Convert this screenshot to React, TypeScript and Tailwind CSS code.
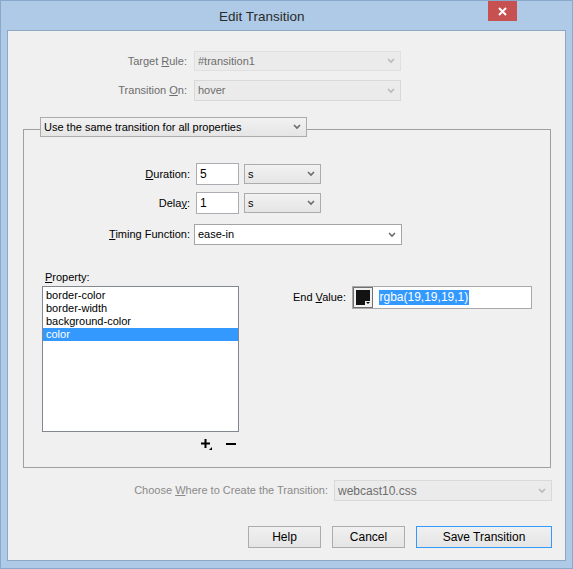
import React from "react";

function Chevron({ color = "#6b6b6b" }: { color?: string }) {
  return (
    <svg width="8" height="6" viewBox="0 0 8 6" className="shrink-0">
      <path d="M1 1 L4 4 L7 1" fill="none" stroke={color} strokeWidth="1.6" />
    </svg>
  );
}

function Select({
  value,
  className,
  disabled,
  white,
}: {
  value: string;
  className: string;
  disabled?: boolean;
  white?: boolean;
}) {
  const look = disabled
    ? "border-[#d9d9d9] bg-[#ebebeb] text-[#6d6d6d]"
    : white
      ? "border-[#a5a5a5] bg-white text-black"
      : "border-[#acacac] bg-gradient-to-b from-[#f2f2f2] to-[#e5e5e5] text-black";
  return (
    <div className={`flex items-center border pl-[3px] pr-[5px] ${look} ${className}`}>
      <span className="flex-1 truncate leading-none">{value}</span>
      <Chevron color={disabled ? "#b9b9b9" : "#6b6b6b"} />
    </div>
  );
}

function Btn({ label, primary, w }: { label: string; primary?: boolean; w: string }) {
  return (
    <div
      className={`flex h-[22px] items-center justify-center border bg-gradient-to-b from-[#f0f0f0] to-[#e5e5e5] text-[12px] text-black ${w} ${
        primary ? "border-[#3399ff]" : "border-[#acacac]"
      }`}
    >
      {label}
    </div>
  );
}

export default function App() {
  const props = ["border-color", "border-width", "background-color", "color"];
  return (
    <div className="flex h-[569px] w-[573px] flex-col border border-[#88a9cc] bg-[#aecae6] font-['Liberation_Sans',Arial,sans-serif] text-[11px]">
      {/* title bar */}
      <div className="flex h-[29px] items-start">
        <div className="ml-[218px] mt-[6px] text-[13.5px] text-[#2b2b2b]">Edit Transition</div>
        <div className="ml-auto mr-[55px] flex h-[20px] w-[29px] items-center justify-center bg-[#c75050]">
          <svg width="9" height="9" viewBox="0 0 9 9">
            <path d="M1 1 L8 8 M8 1 L1 8" stroke="white" strokeWidth="2" />
          </svg>
        </div>
      </div>

      {/* client area */}
      <div className="mx-[6px] mb-[7px] flex-1 border border-[#8ea7c2] bg-[#f0f0f0]">
        <div className="mt-[20px] flex items-center">
          <div className="w-[180px] pr-[1px] text-right text-[#6d6d6d]">
            Target <u>R</u>ule:
          </div>
          <Select value="#transition1" disabled className="ml-[6px] h-[20px] w-[207px] border-[#e0e0e0]" />
        </div>
        <div className="mt-[9px] flex items-center">
          <div className="w-[180px] pr-[1px] text-right text-[#6d6d6d]">
            Transition <u>O</u>n:
          </div>
          <Select value="hover" disabled className="ml-[6px] h-[21px] w-[207px]" />
        </div>

        {/* group box */}
        <div className="ml-[15px] mt-[16px] w-[528px]">
          <Select
            value="Use the same transition for all properties"
            className="relative z-10 ml-[17px] h-[20px] w-[267px]"
          />
          <div className="-mt-[8px] h-[339px] border border-[#a0a0a0]">
            <div className="mt-[33px] flex items-center">
              <div className="w-[166px] text-right">
                <u>D</u>uration:
              </div>
              <div className="ml-[6px] flex h-[22px] w-[43px] items-center border border-[#abadb3] bg-white pl-[3px] text-[12px]">
                5
              </div>
              <Select value="s" className="ml-[5px] h-[20px] w-[77px]" />
            </div>
            <div className="mt-[7px] flex items-center">
              <div className="w-[166px] text-right">
                Dela<u>y</u>:
              </div>
              <div className="ml-[6px] flex h-[22px] w-[43px] items-center border border-[#abadb3] bg-white pl-[3px] text-[12px]">
                1
              </div>
              <Select value="s" className="ml-[5px] h-[20px] w-[77px]" />
            </div>
            <div className="mt-[10px] flex items-center">
              <div className="w-[166px] text-right">
                <u>T</u>iming Function:
              </div>
              <Select value="ease-in" white className="ml-[4px] h-[21px] w-[208px]" />
            </div>

            <div className="mt-[25px] flex">
              <div className="ml-[18px] w-[197px]">
                <div className="ml-[3px] h-[14px] leading-[14px]">
                  <u>P</u>roperty:
                </div>
                <div className="mt-[2px] h-[146px] border border-[#828790] bg-white pt-[2px]">
                  {props.map((p) => (
                    <div
                      key={p}
                      className={`h-[13px] pl-[3px] leading-[13px] ${
                        p === "color" ? "bg-[#3399ff] text-white" : "text-black"
                      }`}
                    >
                      {p}
                    </div>
                  ))}
                </div>
                <div className="mt-[7px] flex justify-end gap-[14px] pr-[3px]">
                  <svg width="11" height="11" viewBox="0 0 11 11">
                    <path d="M4.5 0 V9 M0 4.5 H9" stroke="black" strokeWidth="2" />
                    <path d="M8 11 L11 8 L11 11 Z" fill="black" />
                  </svg>
                  <svg width="10" height="11" viewBox="0 0 10 11">
                    <path d="M0 5 H10" stroke="black" strokeWidth="2" />
                  </svg>
                </div>
              </div>
              <div className="mt-[16px] flex h-[23px] items-center">
                <div className="w-[107px] text-right">
                  End <u>V</u>alue:
                </div>
                <div className="ml-[6px] flex h-[23px] w-[180px] items-center border border-[#a9a9a9] bg-white">
                  <div className="relative h-[21px] w-[20px] border border-[#707070] bg-[#f0f0f0] p-[2px]">
                    <div className="h-full w-full bg-[#131313]" />
                    <div className="absolute bottom-[1px] right-[1px] h-[5px] w-[6px] bg-[#f0f0f0]">
                      <svg width="6" height="5" viewBox="0 0 6 5">
                        <path d="M1 1 H5 L3 3 Z" fill="black" />
                      </svg>
                    </div>
                  </div>
                  <span className="ml-[6px] bg-[#3399ff] px-[0.5px] text-[12px] leading-[15px] text-white">
                    rgba(19,19,19,1)
                  </span>
                </div>
              </div>
            </div>
          </div>
        </div>

        <div className="mt-[12px] flex items-center">
          <div className="w-[320px] text-right text-[#8a8a8a]">
            Choose <u>W</u>here to Create the Transition:
          </div>
          <Select value="webcast10.css" disabled className="ml-[6px] h-[21px] w-[218px] text-[12px]" />
        </div>

        <div className="mt-[25px] flex justify-end gap-[11px] pr-[13px]">
          <Btn label="Help" w="w-[73px]" />
          <Btn label="Cancel" w="w-[73px]" />
          <Btn label="Save Transition" primary w="w-[136px]" />
        </div>
      </div>
    </div>
  );
}
